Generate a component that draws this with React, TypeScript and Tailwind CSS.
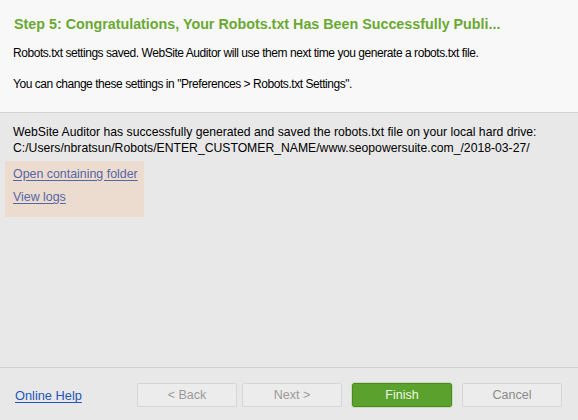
export default function App() {
  return (
    <div className="w-[578px] h-[420px] flex flex-col bg-[#e8e8e8] font-['Liberation_Sans',Arial,sans-serif] text-[12px] text-black overflow-hidden">
      {/* header */}
      <div className="h-[113px] bg-[#f8f8f8] border-b border-[#d2d2d2] px-[14px] pt-[15px]">
        <h1 className="text-[14.3px] leading-[18px] font-bold text-[#6aa833] whitespace-nowrap">
          Step 5: Congratulations, Your Robots.txt Has Been Successfully Publi...
        </h1>
        <p className="mt-[13px] leading-[15px] -ml-[1px] tracking-[-0.45px]">
          Robots.txt settings saved. WebSite Auditor will use them next time you generate a robots.txt file.
        </p>
        <p className="mt-[16px] leading-[15px] -ml-[1px] tracking-[-0.45px]">
          You can change these settings in "Preferences &gt; Robots.txt Settings".
        </p>
      </div>

      {/* body */}
      <div className="flex-1 px-[13px] pt-[11px]">
        <p className="leading-[16px] text-[12.2px]">
          WebSite Auditor has successfully generated and saved the robots.txt file on your local hard drive:
          <br />
          C:/Users/nbratsun/Robots/ENTER_CUSTOMER_NAME/www.seopowersuite.com_/2018-03-27/
        </p>
        <div className="mt-[5px] -ml-[8px] w-[139px] h-[56px] bg-[#ecdcd0] pl-[8px] pt-[6px] flex flex-col gap-[8px] text-[12.4px] whitespace-nowrap">
          <a className="text-[#5567a6] underline underline-offset-[2px] leading-[15px] w-fit">Open containing folder</a>
          <a className="text-[#5567a6] underline underline-offset-[2px] leading-[15px] w-fit">View logs</a>
        </div>
      </div>

      {/* footer */}
      <div className="h-[53px] border-t border-[#cfcfcf] flex items-center pl-[15px] pr-[16px] pt-[2px]">
        <a className="text-[#2257b8] underline underline-offset-[2px] text-[12.8px] mt-[2px]">Online Help</a>
        <div className="ml-auto flex items-center">
          <button className="w-[100px] h-[24px] rounded-[2px] border border-[#d6d6d6] bg-[#ececec] text-[#9a9a9a] text-[12.5px]">&lt; Back</button>
          <button className="ml-[5px] w-[100px] h-[24px] rounded-[2px] border border-[#d6d6d6] bg-[#ececec] text-[#9a9a9a] text-[12.5px]">Next &gt;</button>
          <button className="ml-[10px] w-[100px] h-[24px] rounded-[2px] border border-[#4a8a22] bg-[#5aa12d] text-[#eef7e4] outline outline-1 outline-[#c9dcbc] text-[12.5px]">Finish</button>
          <button className="ml-[10px] w-[100px] h-[24px] rounded-[2px] border border-[#d6d6d6] bg-[#ececec] text-[#8a8a8a] text-[12.5px]">Cancel</button>
        </div>
      </div>
    </div>
  );
}
